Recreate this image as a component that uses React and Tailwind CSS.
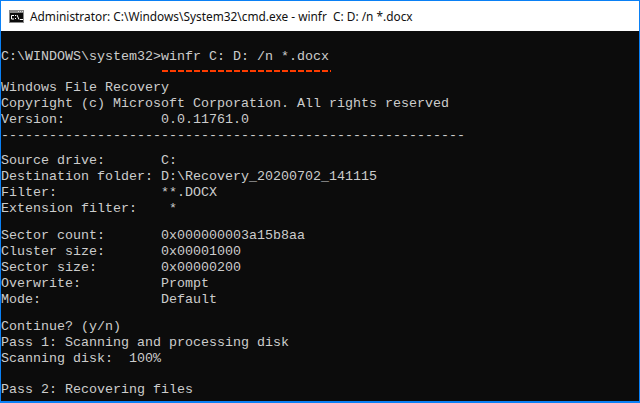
const rows = [
  { text: 'C:\\WINDOWS\\system32>winfr C: D: /n *.docx', top: 'mt-[18px]' },
  { text: 'Windows File Recovery', top: 'mt-[15px]' },
  { text: 'Copyright (c) Microsoft Corporation. All rights reserved' },
  { text: 'Version:            0.0.11761.0' },
  { text: '----------------------------------------------------------' },
  { text: 'Source drive:       C:', top: 'mt-[9px]' },
  { text: 'Destination folder: D:\\Recovery_20200702_141115' },
  { text: 'Filter:             **.DOCX' },
  { text: 'Extension filter:    *' },
  { text: 'Sector count:       0x000000003a15b8aa', top: 'mt-[11px]' },
  { text: 'Cluster size:       0x00001000' },
  { text: 'Sector size:        0x00000200' },
  { text: 'Overwrite:          Prompt' },
  { text: 'Mode:               Default' },
  { text: 'Continue? (y/n)', top: 'mt-[11px]' },
  { text: 'Pass 1: Scanning and processing disk' },
  { text: 'Scanning disk:  100%' },
  { text: 'Pass 2: Recovering files', top: 'mt-[15px]' },
];

function CmdIcon() {
  return (
    <svg width="15" height="13" viewBox="0 0 15 13" className="shrink-0">
      <rect x="0" y="0" width="15" height="13" fill="#8a8a8a" />
      <rect x="9" y="1" width="1" height="1" fill="#ddd" />
      <rect x="11" y="1" width="1" height="1" fill="#ddd" />
      <rect x="13" y="1" width="1" height="1" fill="#ddd" />
      <rect x="1" y="3" width="13" height="9" fill="#0c0c0c" />
      <path d="M5 5.5H2.5v3.5H5M6.5 5v1M6.5 8v1M8 5l2 4.5M11 9.5h3" stroke="#fff" strokeWidth="1" fill="none" />
    </svg>
  );
}

export default function App() {
  return (
    <div className="w-[640px] h-[403px] overflow-hidden flex flex-col border border-[#0a80f5] border-b-2 bg-[#0c0c0c]">
      <div className="h-[30px] shrink-0 bg-white flex items-center gap-[6px] pl-[8px]">
        <CmdIcon />
        <span className="pt-[1px] font-['Noto_Sans',sans-serif] text-[11.87px] text-[#111] whitespace-pre">
          {'Administrator: C:\\Windows\\System32\\cmd.exe - winfr  C: D: /n *.docx'}
        </span>
      </div>
      <div className="flex-1 overflow-hidden relative font-['Liberation_Mono',monospace] text-[13.33px] leading-[16px] text-[#cccccc]">
        {rows.map((row) => (
          <div key={row.text} className={`whitespace-pre ${row.top || ''}`}>
            {row.text}
          </div>
        ))}
        <div className="absolute left-[161px] top-[38.5px] w-[169px] h-[2px] blur-[0.4px] bg-[repeating-linear-gradient(90deg,#ff3c00_0px,#ff3c00_6px,transparent_6px,transparent_8px)]" />
      </div>
    </div>
  );
}
